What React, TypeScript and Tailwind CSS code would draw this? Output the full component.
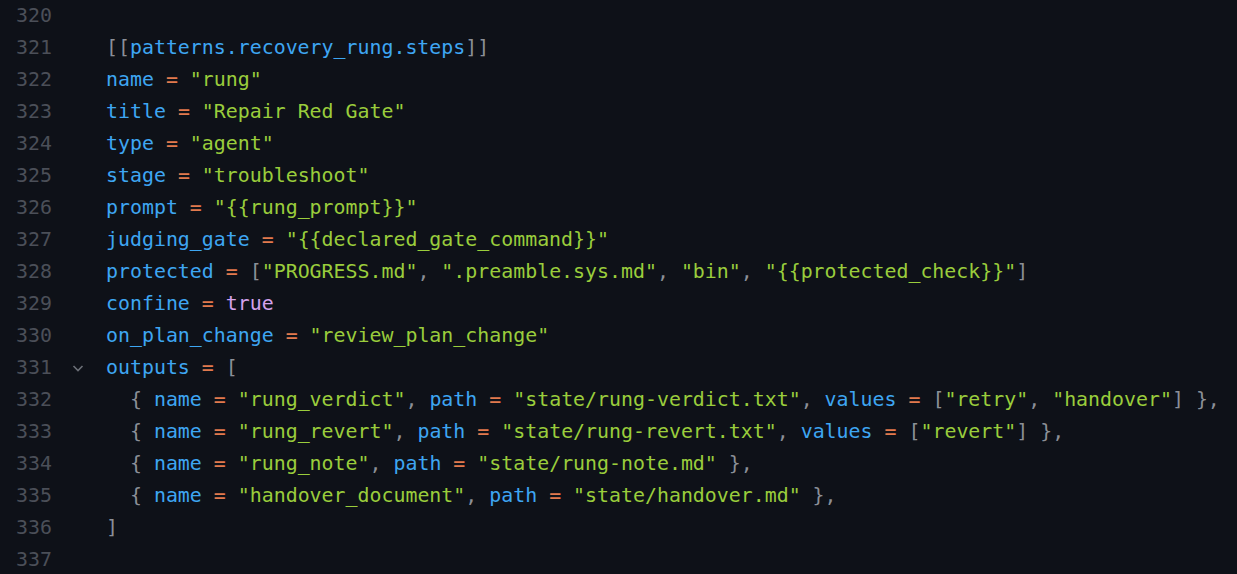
import React from 'react';

type Tok = [string, string];

const C: Record<string, string> = {
  k: 'text-[#3ea6f2]',
  s: 'text-[#9acd3c]',
  o: 'text-[#e27a4e]',
  p: 'text-[#8b8f97]',
  b: 'text-[#d4a2ec]',
  t: 'text-[#c9ccd2]',
};

const kv = (key: string, rest: Tok[]): Tok[] => [['k', key], ['t', ' '], ['o', '='], ['t', ' '], ...rest];

const lines: { n: number; fold?: boolean; toks: Tok[] }[] = [
  { n: 320, toks: [] },
  { n: 321, toks: [['p', '[['], ['k', 'patterns.recovery_rung.steps'], ['p', ']]']] },
  { n: 322, toks: kv('name', [['s', '"rung"']]) },
  { n: 323, toks: kv('title', [['s', '"Repair Red Gate"']]) },
  { n: 324, toks: kv('type', [['s', '"agent"']]) },
  { n: 325, toks: kv('stage', [['s', '"troubleshoot"']]) },
  { n: 326, toks: kv('prompt', [['s', '"{{rung_prompt}}"']]) },
  { n: 327, toks: kv('judging_gate', [['s', '"{{declared_gate_command}}"']]) },
  {
    n: 328,
    toks: kv('protected', [
      ['p', '['],
      ['s', '"PROGRESS.md"'],
      ['p', ', '],
      ['s', '".preamble.sys.md"'],
      ['p', ', '],
      ['s', '"bin"'],
      ['p', ', '],
      ['s', '"{{protected_check}}"'],
      ['p', ']'],
    ]),
  },
  { n: 329, toks: kv('confine', [['b', 'true']]) },
  { n: 330, toks: kv('on_plan_change', [['s', '"review_plan_change"']]) },
  { n: 331, fold: true, toks: kv('outputs', [['p', '[']]) },
  {
    n: 332,
    toks: [
      ['t', '  '],
      ['p', '{ '],
      ...kv('name', [['s', '"rung_verdict"'], ['p', ', ']]),
      ...kv('path', [['s', '"state/rung-verdict.txt"'], ['p', ', ']]),
      ...kv('values', [['p', '['], ['s', '"retry"'], ['p', ', '], ['s', '"handover"'], ['p', '] },']]),
    ],
  },
  {
    n: 333,
    toks: [
      ['t', '  '],
      ['p', '{ '],
      ...kv('name', [['s', '"rung_revert"'], ['p', ', ']]),
      ...kv('path', [['s', '"state/rung-revert.txt"'], ['p', ', ']]),
      ...kv('values', [['p', '['], ['s', '"revert"'], ['p', '] },']]),
    ],
  },
  {
    n: 334,
    toks: [
      ['t', '  '],
      ['p', '{ '],
      ...kv('name', [['s', '"rung_note"'], ['p', ', ']]),
      ...kv('path', [['s', '"state/rung-note.md"'], ['p', ' },']]),
    ],
  },
  {
    n: 335,
    toks: [
      ['t', '  '],
      ['p', '{ '],
      ...kv('name', [['s', '"handover_document"'], ['p', ', ']]),
      ...kv('path', [['s', '"state/handover.md"'], ['p', ' },']]),
    ],
  },
  { n: 336, toks: [['p', ']']] },
  { n: 337, toks: [] },
];

const App: React.FC = () => {
  return (
    <div className="w-[1237px] h-[574px] overflow-hidden bg-[#0e1118] font-['DejaVu_Sans_Mono',monospace] text-[19.9px] leading-[32px]">
      {lines.map((line) => (
        <div key={line.n} className="flex h-[32px] items-center whitespace-pre">
          <div className="w-[52px] text-right text-[#4b4f58]">{line.n}</div>
          <div className="w-[54px] flex justify-center">
            {line.fold && (
              <svg width="14" height="14" viewBox="0 0 14 14" className="ml-[-2px]">
                <path d="M2.5 5 L7 9.5 L11.5 5" fill="none" stroke="#6b6f77" strokeWidth="1.6" />
              </svg>
            )}
          </div>
          <div>
            {line.toks.map(([cls, text], i) => (
              <span key={i} className={C[cls]}>
                {text}
              </span>
            ))}
          </div>
        </div>
      ))}
    </div>
  );
};

export default App;
